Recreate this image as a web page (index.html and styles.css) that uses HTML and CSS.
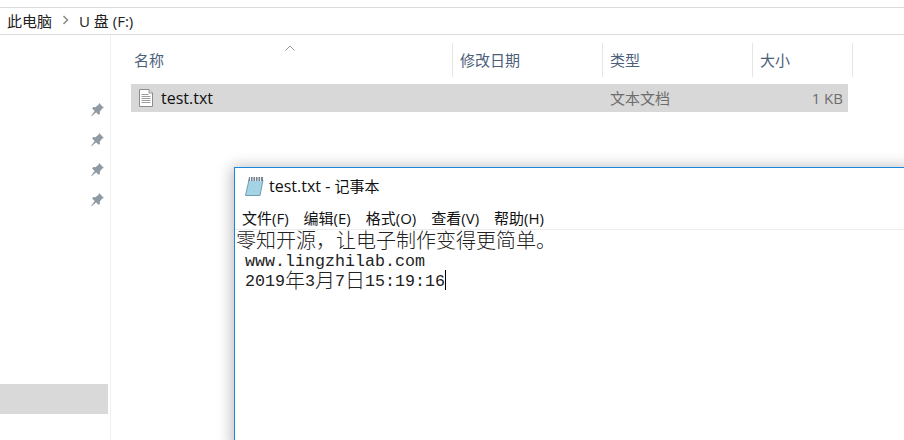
FILE: index.html
```html
<!DOCTYPE html>
<html lang="zh-CN">
<head>
  <meta charset="UTF-8">
  <meta name="viewport" content="width=device-width, initial-scale=1.0">
  <title>U 盘 (F:)</title>
  <link rel="stylesheet" href="styles.css">
</head>
<body>
  <div class="address-bar">
    <span>此电脑</span>
    <svg class="crumb-arrow" width="7" height="10" viewBox="0 0 7 10"><path d="M1.500 1l4 4-4 4" fill="none" stroke="#8a8a8a" stroke-width="1.500"/></svg>
    <span>U 盘 (F:)</span>
  </div>

  <div class="explorer">
    <div class="sidebar">
      <div class="pins">
        <svg class="pin" width="15" height="15" viewBox="0 0 14 14"><path d="M8.500 1l4.500 4.500-1.600.6-2.300 3 .2 2L8 12 2 6l1-1.300 2 .2 3-2.300zM4.500 8.200l1.300 1.300L1.500 13.300 1 13z" fill="#8f9aa3"/></svg>
        <svg class="pin" width="15" height="15" viewBox="0 0 14 14"><path d="M8.500 1l4.500 4.500-1.600.6-2.300 3 .2 2L8 12 2 6l1-1.300 2 .2 3-2.300zM4.500 8.200l1.300 1.300L1.500 13.300 1 13z" fill="#8f9aa3"/></svg>
        <svg class="pin" width="15" height="15" viewBox="0 0 14 14"><path d="M8.500 1l4.500 4.500-1.600.6-2.300 3 .2 2L8 12 2 6l1-1.300 2 .2 3-2.300zM4.500 8.200l1.300 1.300L1.500 13.300 1 13z" fill="#8f9aa3"/></svg>
        <svg class="pin" width="15" height="15" viewBox="0 0 14 14"><path d="M8.500 1l4.500 4.500-1.600.6-2.300 3 .2 2L8 12 2 6l1-1.300 2 .2 3-2.300zM4.500 8.200l1.300 1.300L1.500 13.300 1 13z" fill="#8f9aa3"/></svg>
      </div>
      <div class="side-selected"></div>
    </div>

    <div class="files">
      <div class="file-head">
        <svg class="sort-arrow" width="10" height="6" viewBox="0 0 10 6"><path d="M.5 5.500L5 1l4.500 4.500" fill="none" stroke="#9a9a9a"/></svg>
        <div class="col col-name">名称</div>
        <div class="col col-date">修改日期</div>
        <div class="col col-type">类型</div>
        <div class="col col-size">大小</div>
      </div>
      <div class="file-row">
        <div class="cell-name">
          <svg width="16" height="18" viewBox="0 0 16 18"><path d="M1.500.5h9.500l3.500 3.500v13.500h-13z" fill="#fff" stroke="#8c8c8c"/><path d="M11 .5v3.500h3.500" fill="#eee" stroke="#8c8c8c"/><path d="M3.500 5.500h7M3.500 7.500h9M3.500 9.500h9M3.500 11.500h9M3.500 13.500h9" stroke="#9d9d9d"/></svg>
          <span class="latin">test.txt</span>
        </div>
        <div class="cell-type">文本文档</div>
        <div class="cell-size">1 KB</div>
      </div>
    </div>
  </div>

  <div class="notepad">
    <div class="np-title">
      <svg width="20" height="20" viewBox="0 0 20 20"><path d="M5 4h14l-3 15.500H1.500z" fill="#a4d3e6" stroke="#6f9db2"/><path d="M5 1h14v4H4.300z" fill="#77858f"/><path d="M6.500 1v4M9 1v4M11.500 1v4M14 1v4M16.500 1v4" stroke="#e8edf0"/></svg>
      <span><span class="latin">test.txt - </span>记事本</span>
    </div>
    <div class="np-menu">
      <span>文件(F)</span>
      <span>编辑(E)</span>
      <span>格式(O)</span>
      <span>查看(V)</span>
      <span>帮助(H)</span>
    </div>
    <div class="np-text">
      <div class="np-line"><span class="cjk">零知开源，让电子制作变得更简单。</span></div>
      <div class="np-line"> www.lingzhilab.com</div>
      <div class="np-line"> 2019<span class="cjk">年</span>3<span class="cjk">月</span>7<span class="cjk">日</span>15:19:16<span class="caret"></span></div>
    </div>
  </div>
</body>
</html>
```

FILE: styles.css
```css
html, body {
  height: 100%;
}
body {
  margin: 0;
  background-color: #fff;
  font-family: "Open Sans", "Noto Sans CJK SC", sans-serif;
  font-size: 15px;
  color: #222;
  overflow: hidden;
  display: flex;
  flex-direction: column;
}
.latin {
  font-size: 16px;
}
.address-bar {
  margin-top: 7px;
  height: 24px;
  flex-shrink: 0;
  display: flex;
  align-items: center;
  gap: 10px;
  padding: 0 0 2px 7px;
  border-top: 1px solid #dcdcdc;
  border-bottom: 1px solid #dcdcdc;
}
.explorer {
  flex: 1;
  display: flex;
}
.sidebar {
  width: 110px;
  flex-shrink: 0;
  border-right: 1px solid #f0f0f0;
}
.pins {
  display: flex;
  flex-direction: column;
  align-items: flex-end;
  gap: 15px;
  padding: 67px 5px 0 0;
}
.pin {
  display: block;
}
.side-selected {
  margin-top: 177px;
  width: 108px;
  height: 30px;
  background-color: #d9d9d9;
}
.files {
  flex: 1;
  padding-left: 20px;
}
.file-head {
  position: relative;
  display: flex;
  height: 41px;
  margin-top: 8px;
  color: #4c607a;
}
.sort-arrow {
  position: absolute;
  left: 154px;
  top: 2px;
}
.col {
  box-sizing: border-box;
  height: 34px;
  padding: 6px 0 0 7px;
  border-right: 1px solid #e5e5e5;
}
.col-name { width: 322px; padding-left: 3px; }
.col-date { width: 150px; }
.col-type { width: 150px; }
.col-size { width: 100px; }
.file-row {
  display: flex;
  align-items: center;
  width: 717px;
  height: 28px;
  background-color: #d8d8d8;
  color: #6d6d6d;
}
.cell-name {
  width: 479px;
  display: flex;
  align-items: center;
  gap: 7px;
  padding-left: 7px;
  box-sizing: border-box;
  color: #111;
}
.cell-type {
  width: 150px;
  padding-bottom: 2px;
}
.cell-size {
  flex: 1;
  text-align: right;
  padding-right: 5px;
}
.notepad {
  position: absolute;
  left: 234px;
  top: 167px;
  right: -10px;
  bottom: -10px;
  background-color: #fff;
  border: 1px solid #1a86e0;
  box-shadow: -2px 0 14px rgba(0, 0, 0, .28);
}
.np-title {
  height: 35px;
  display: flex;
  align-items: center;
  gap: 5px;
  padding: 0 0 2px 9px;
  color: #111;
}
.np-menu {
  height: 24px;
  display: flex;
  gap: 15px;
  align-items: center;
  padding-left: 7px;
  border-bottom: 1px solid #ececec;
  color: #111;
}
.np-text {
  font-family: "Liberation Mono", monospace;
  font-size: 16.67px;
  color: #222;
}
.np-line {
  height: 20px;
  line-height: 24px;
  white-space: pre;
}
.np-line:first-child {
  padding-left: 1px;
}
.cjk {
  display: inline-block;
  font-family: "Noto Sans CJK SC", sans-serif;
  font-size: 20px;
  font-weight: 300;
  line-height: 20px;
  vertical-align: top;
}
.caret {
  display: inline-block;
  width: 1px;
  height: 20px;
  background-color: #000;
  vertical-align: top;
}
```
